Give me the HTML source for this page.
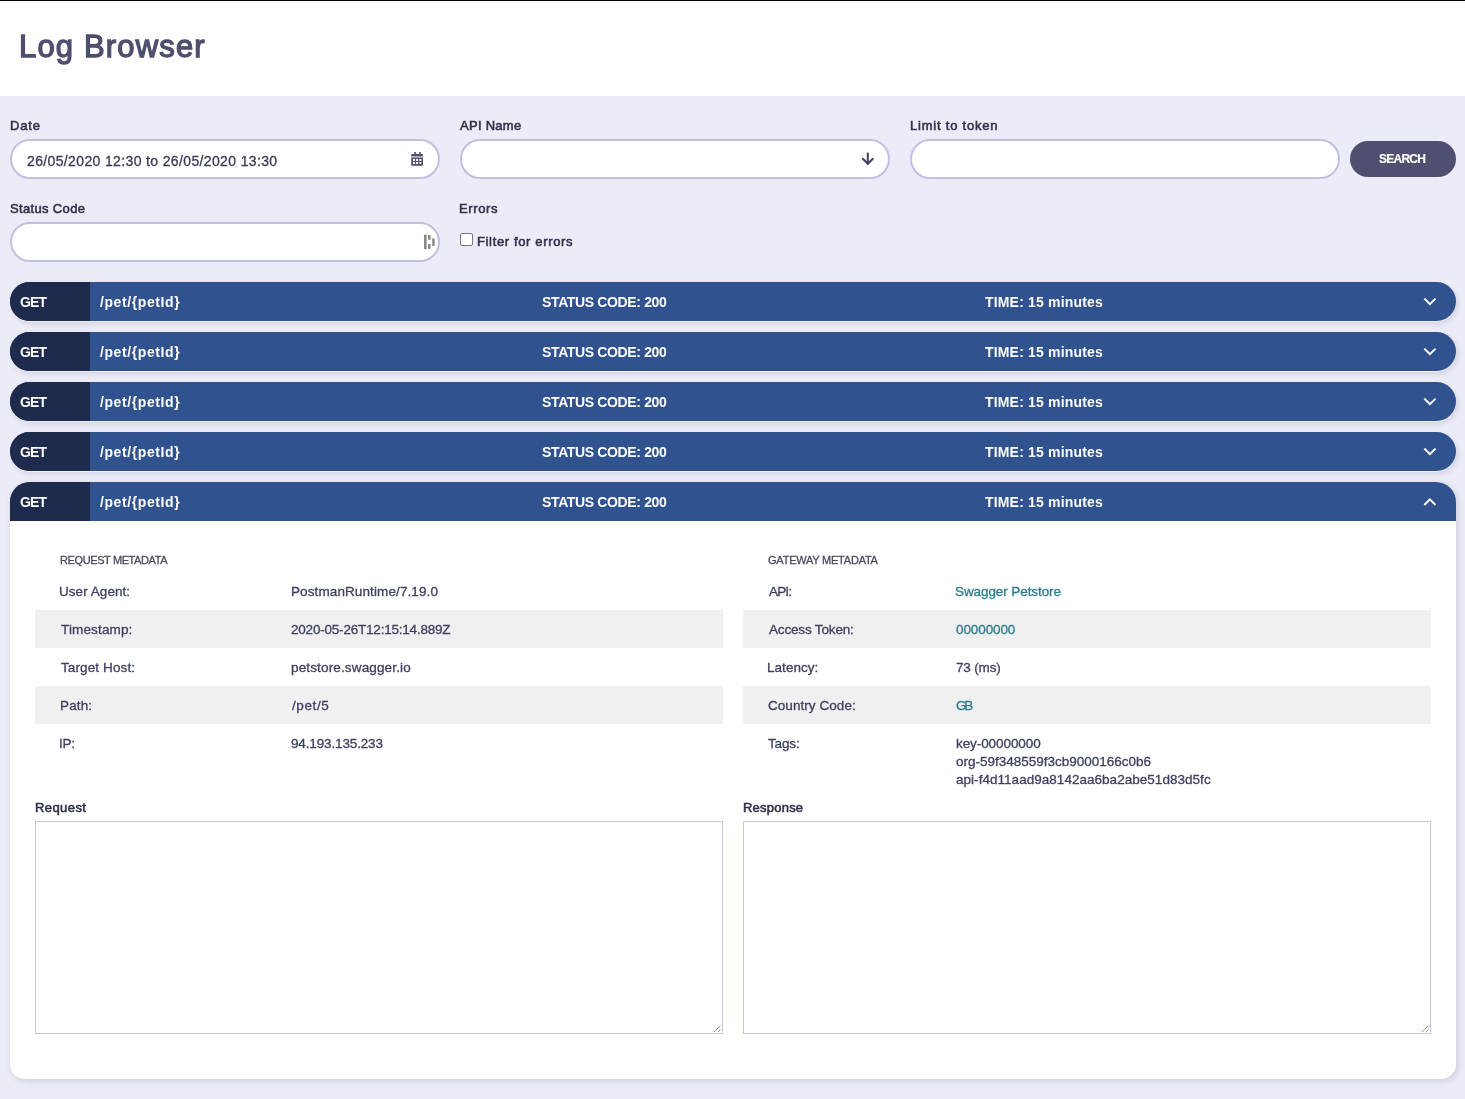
<!DOCTYPE html>
<html><head><meta charset="utf-8">
<style>
*{box-sizing:border-box;margin:0;padding:0}
html,body{width:1465px;height:1099px;overflow:hidden}
body{background:#ECECF8;font-family:"Liberation Sans",sans-serif;position:relative;-webkit-font-smoothing:antialiased}
.tx,.bar .t{will-change:transform}
.tx.n{-webkit-text-stroke:0.3px currentColor}
.tx.sb{-webkit-text-stroke:0.55px currentColor;font-weight:normal!important}
#title{-webkit-text-stroke:1.3px currentColor;font-weight:normal!important}
#search{-webkit-text-stroke:0.15px currentColor}
.tx{position:absolute;white-space:nowrap;line-height:16px}
#topline{position:absolute;left:0;top:0;width:1465px;height:1px;background:#000}
#header{position:absolute;left:0;top:1px;width:1465px;height:95px;background:#fff}
.inp{position:absolute;height:40px;width:430px;border:2px solid #C0C0E2;border-radius:20px;background:#fff}
#searchbtn{position:absolute;left:1350px;top:141px;width:106px;height:36px;border-radius:18px;background:#4F4F6F}
.bar{position:absolute;left:10px;width:1446px;height:39px;background:#30528E;border-radius:20px;box-shadow:0 1px 0 rgba(255,255,255,.6),2px 3px 5px rgba(40,40,80,.13);overflow:hidden;color:#fff;font-weight:bold}
.bar .hl{position:absolute;left:0;top:0;right:0;bottom:0;border-radius:20px;box-shadow:none}
.bar .get{position:absolute;left:0;top:0;width:80px;height:39px;background:#1E2B4D;}
.bar .get:after{content:'';position:absolute;left:80px;top:0;width:1px;height:39px;background:transparent}
.bar .t{position:absolute;line-height:39px;white-space:nowrap}
#panel{position:absolute;left:10px;top:482px;width:1446px;height:597px;background:#fff;border-radius:20px 20px 15px 15px;box-shadow:2px 2px 7px rgba(20,20,50,.14)}
.row{position:absolute;height:38px;width:688px;background:#F0F0F0}
.ta{position:absolute;border:1px solid #C4C4E4;background:#fff;width:688px;height:213px}
</style></head>
<body>
<div id="topline"></div>
<div id="header"></div>
<div class="inp" style="left:10px;top:139px"></div>
<div class="inp" style="left:460px;top:139px"></div>
<div class="inp" style="left:910px;top:139px"></div>
<div id="searchbtn"></div>
<div class="inp" style="left:10px;top:222px"></div>
<div style="position:absolute;left:460px;top:233px;width:13px;height:13px;border:1px solid #767676;border-radius:2px;background:#fff"></div>
<div class="bar" style="top:282px"><div class="get"></div><div class="hl"></div><span class="t" style="left:10.2px;top:1.0px;font-size:14px;letter-spacing:-0.900px">GET</span><span class="t" style="left:89.56px;top:1.0px;font-size:14px;letter-spacing:0.588px">/pet/{petId}</span><span class="t" style="left:532.34px;top:1.0px;font-size:14px;letter-spacing:-0.361px">STATUS CODE: <b>200</b></span><span class="t" style="left:975.08px;top:1.0px;font-size:14px;letter-spacing:0.171px">TIME: <b>15 minutes</b></span></div>
<div class="bar" style="top:332px"><div class="get"></div><div class="hl"></div><span class="t" style="left:10.2px;top:1.0px;font-size:14px;letter-spacing:-0.900px">GET</span><span class="t" style="left:89.56px;top:1.0px;font-size:14px;letter-spacing:0.588px">/pet/{petId}</span><span class="t" style="left:532.34px;top:1.0px;font-size:14px;letter-spacing:-0.361px">STATUS CODE: <b>200</b></span><span class="t" style="left:975.08px;top:1.0px;font-size:14px;letter-spacing:0.171px">TIME: <b>15 minutes</b></span></div>
<div class="bar" style="top:382px"><div class="get"></div><div class="hl"></div><span class="t" style="left:10.2px;top:1.0px;font-size:14px;letter-spacing:-0.900px">GET</span><span class="t" style="left:89.56px;top:1.0px;font-size:14px;letter-spacing:0.588px">/pet/{petId}</span><span class="t" style="left:532.34px;top:1.0px;font-size:14px;letter-spacing:-0.361px">STATUS CODE: <b>200</b></span><span class="t" style="left:975.08px;top:1.0px;font-size:14px;letter-spacing:0.171px">TIME: <b>15 minutes</b></span></div>
<div class="bar" style="top:432px"><div class="get"></div><div class="hl"></div><span class="t" style="left:10.2px;top:1.0px;font-size:14px;letter-spacing:-0.900px">GET</span><span class="t" style="left:89.56px;top:1.0px;font-size:14px;letter-spacing:0.588px">/pet/{petId}</span><span class="t" style="left:532.34px;top:1.0px;font-size:14px;letter-spacing:-0.361px">STATUS CODE: <b>200</b></span><span class="t" style="left:975.08px;top:1.0px;font-size:14px;letter-spacing:0.171px">TIME: <b>15 minutes</b></span></div>
<div id="panel"></div>
<div class="bar" style="top:482px;border-radius:20px 20px 0 0;box-shadow:none"><div class="get"></div><div class="hl" style="border-radius:20px 20px 0 0"></div><span class="t" style="left:10.2px;top:1.0px;font-size:14px;letter-spacing:-0.900px">GET</span><span class="t" style="left:89.56px;top:1.0px;font-size:14px;letter-spacing:0.588px">/pet/{petId}</span><span class="t" style="left:532.34px;top:1.0px;font-size:14px;letter-spacing:-0.361px">STATUS CODE: <b>200</b></span><span class="t" style="left:975.08px;top:1.0px;font-size:14px;letter-spacing:0.171px">TIME: <b>15 minutes</b></span></div>
<div class="row" style="left:35px;top:610px"></div><div class="row" style="left:35px;top:686px"></div><div class="row" style="left:743px;top:610px"></div><div class="row" style="left:743px;top:686px"></div>
<div class="ta" style="left:35px;top:821px"></div><div class="ta" style="left:743px;top:821px"></div>
<div class="tx" id="title" style="left:18.64px;top:39.00px;font-size:31px;font-weight:500;color:#4E4F6E;letter-spacing:1.167px">Log Browser</div>
<div class="tx sb" id="date_lbl" style="left:10.12px;top:118.00px;font-size:13px;font-weight:sb;color:#2F3149;letter-spacing:0.833px">Date</div>
<div class="tx n" id="date_val" style="left:26.56px;top:153.00px;font-size:14px;font-weight:normal;color:#3A3B58;letter-spacing:0.363px">26/05/2020 12:30 to 26/05/2020 13:30</div>
<div class="tx sb" id="api_lbl" style="left:459.74px;top:118.00px;font-size:13px;font-weight:sb;color:#2F3149;letter-spacing:0.273px">API Name</div>
<div class="tx sb" id="tok_lbl" style="left:910.12px;top:118.00px;font-size:13px;font-weight:sb;color:#2F3149;letter-spacing:0.780px">Limit to token</div>
<div class="tx" id="search" style="left:1378.78px;top:151.00px;font-size:12px;font-weight:bold;color:#FFFFFF;letter-spacing:-0.750px">SEARCH</div>
<div class="tx sb" id="sc_lbl" style="left:9.66px;top:201.00px;font-size:13px;font-weight:sb;color:#2F3149;letter-spacing:0.338px">Status Code</div>
<div class="tx sb" id="err_lbl" style="left:459.42px;top:201.00px;font-size:13px;font-weight:sb;color:#2F3149;letter-spacing:0.607px">Errors</div>
<div class="tx sb" id="filter" style="left:477.42px;top:234.00px;font-size:13px;font-weight:sb;color:#2F3149;letter-spacing:0.642px">Filter for errors</div>
<div class="tx sb" id="req_lbl" style="left:34.92px;top:800.00px;font-size:13px;font-weight:sb;color:#2F3149;letter-spacing:0.423px">Request</div>
<div class="tx sb" id="resp_lbl" style="left:742.92px;top:800.00px;font-size:13px;font-weight:sb;color:#2F3149;letter-spacing:0.221px">Response</div>
<div class="tx n" id="req_meta" style="left:59.56px;top:552.00px;font-size:11px;font-weight:normal;color:#4A4B5E;letter-spacing:-0.393px">REQUEST METADATA</div>
<div class="tx n" id="gw_meta" style="left:768.24px;top:552.00px;font-size:11px;font-weight:normal;color:#4A4B5E;letter-spacing:-0.221px">GATEWAY METADATA</div>
<div class="tx n" id="rk0" style="left:58.96px;top:584.00px;font-size:13.5px;font-weight:normal;color:#3E4060;letter-spacing:0.056px">User Agent:</div>
<div class="tx n" id="rv0" style="left:290.76px;top:584.00px;font-size:13.5px;font-weight:normal;color:#3E4060;letter-spacing:0.106px">PostmanRuntime/7.19.0</div>
<div class="tx n" id="rk1" style="left:60.52px;top:622.00px;font-size:13.5px;font-weight:normal;color:#3E4060;letter-spacing:0.148px">Timestamp:</div>
<div class="tx n" id="rv1" style="left:291.24px;top:622.00px;font-size:13.5px;font-weight:normal;color:#3E4060;letter-spacing:-0.207px">2020-05-26T12:15:14.889Z</div>
<div class="tx n" id="rk2" style="left:60.52px;top:660.00px;font-size:13.5px;font-weight:normal;color:#3E4060;letter-spacing:0.112px">Target Host:</div>
<div class="tx n" id="rv2" style="left:290.84px;top:660.00px;font-size:13.5px;font-weight:normal;color:#3E4060;letter-spacing:0.147px">petstore.swagger.io</div>
<div class="tx n" id="rk3" style="left:59.76px;top:698.00px;font-size:13.5px;font-weight:normal;color:#3E4060;letter-spacing:0.126px">Path:</div>
<div class="tx n" id="rv3" style="left:291.76px;top:698.00px;font-size:13.5px;font-weight:normal;color:#3E4060;letter-spacing:0.599px">/pet/5</div>
<div class="tx n" id="rk4" style="left:59.48px;top:736.00px;font-size:13.5px;font-weight:normal;color:#3E4060;letter-spacing:-0.300px">IP:</div>
<div class="tx n" id="rv4" style="left:290.88px;top:736.00px;font-size:13.5px;font-weight:normal;color:#3E4060;letter-spacing:-0.143px">94.193.135.233</div>
<div class="tx n" id="gk0" style="left:768.50px;top:584.00px;font-size:13.5px;font-weight:normal;color:#3E4060;letter-spacing:-0.833px">API:</div>
<div class="tx n" id="gk1" style="left:768.50px;top:622.00px;font-size:13.5px;font-weight:normal;color:#3E4060;letter-spacing:-0.165px">Access Token:</div>
<div class="tx n" id="gk2" style="left:766.66px;top:660.00px;font-size:13.5px;font-weight:normal;color:#3E4060;letter-spacing:0.040px">Latency:</div>
<div class="tx n" id="gk3" style="left:767.74px;top:698.00px;font-size:13.5px;font-weight:normal;color:#3E4060;letter-spacing:0.057px">Country Code:</div>
<div class="tx n" id="gk4" style="left:768.42px;top:736.00px;font-size:13.5px;font-weight:normal;color:#3E4060;letter-spacing:-0.157px">Tags:</div>
<div class="tx n" id="gv0" style="left:955.40px;top:584.00px;font-size:13.5px;font-weight:normal;color:#2C7C8E;letter-spacing:-0.090px">Swagger Petstore</div>
<div class="tx n" id="gv1" style="left:955.60px;top:622.00px;font-size:13.5px;font-weight:normal;color:#2C7C8E;letter-spacing:-0.098px">00000000</div>
<div class="tx n" id="gv2" style="left:956.36px;top:660.00px;font-size:13.5px;font-weight:normal;color:#3E4060;letter-spacing:-0.176px">73 (ms)</div>
<div class="tx n" id="gv3" style="left:955.96px;top:698.00px;font-size:13.5px;font-weight:normal;color:#2C7C8E;letter-spacing:-2.200px">GB</div>
<div class="tx n" id="tag0" style="left:955.80px;top:736.00px;font-size:13.5px;font-weight:normal;color:#3E4060;letter-spacing:-0.082px">key-00000000</div>
<div class="tx n" id="tag1" style="left:956.48px;top:754.00px;font-size:13.5px;font-weight:normal;color:#3E4060;letter-spacing:-0.008px">org-59f348559f3cb9000166c0b6</div>
<div class="tx n" id="tag2" style="left:956.20px;top:772.00px;font-size:13.5px;font-weight:normal;color:#3E4060;letter-spacing:0.033px">api-f4d11aad9a8142aa6ba2abe51d83d5fc</div>

<svg style="position:absolute;left:0;top:0" width="1465" height="1099" viewBox="0 0 1465 1099">
<!-- calendar -->
<g fill="#4F5070">
<rect x="411.2" y="154" width="11.8" height="2.2" rx="0.8"/>
<rect x="414.2" y="152" width="1.6" height="2.5"/>
<rect x="419.2" y="152" width="1.6" height="2.5"/>
<rect x="411.2" y="156.2" width="11.8" height="1.6" fill="#A3A4B6"/>
<path d="M411.2 157.8 H423 V164.7 Q423 165.7 422 165.7 H412.2 Q411.2 165.7 411.2 164.7 Z"/>
</g>
<g fill="#fff">
<rect x="413" y="158.9" width="2" height="2"/><rect x="416.1" y="158.9" width="2" height="2"/><rect x="419.4" y="158.9" width="2" height="2"/>
<rect x="413" y="162" width="2" height="2"/><rect x="416.1" y="162" width="2" height="2"/><rect x="419.4" y="162" width="2" height="2"/>
</g>
<!-- arrow down -->
<g stroke="#3E4060" stroke-width="2" fill="none" stroke-linecap="round" stroke-linejoin="round">
<path d="M867.8 153.5 V163.8"/>
<path d="M862.9 158.8 L867.8 163.8 L872.8 158.8"/>
</g>
<!-- status code spinner-ish -->
<g fill="#8A8785">
<rect x="424" y="234.6" width="2.6" height="14.5"/>
<rect x="428" y="235.1" width="2.6" height="4.7"/>
<rect x="428" y="244" width="2.6" height="4.8"/>
<rect x="432.2" y="238.4" width="2.4" height="7.6"/>
</g>
<!-- resize handles -->
<g stroke="#555" stroke-width="1" stroke-dasharray="1 0.4">
<path d="M714.4 1031.6 L720.6 1025.4"/>
<path d="M718.4 1031.6 L720.6 1029.4"/>
<path d="M1422.4 1031.6 L1428.6 1025.4"/>
<path d="M1426.4 1031.6 L1428.6 1029.4"/>
</g>
<!-- chevrons -->
<g stroke="#fff" stroke-width="2" fill="none" stroke-linecap="square">
<path d="M1425 299.3 L1429.9 304.2 L1434.8 299.3"/>
<path d="M1425 349.3 L1429.9 354.2 L1434.8 349.3"/>
<path d="M1425 399.3 L1429.9 404.2 L1434.8 399.3"/>
<path d="M1425 449.3 L1429.9 454.2 L1434.8 449.3"/>
<path d="M1425 504.3 L1429.9 499.4 L1434.8 504.3"/>
</g>
</svg>
</body></html>
